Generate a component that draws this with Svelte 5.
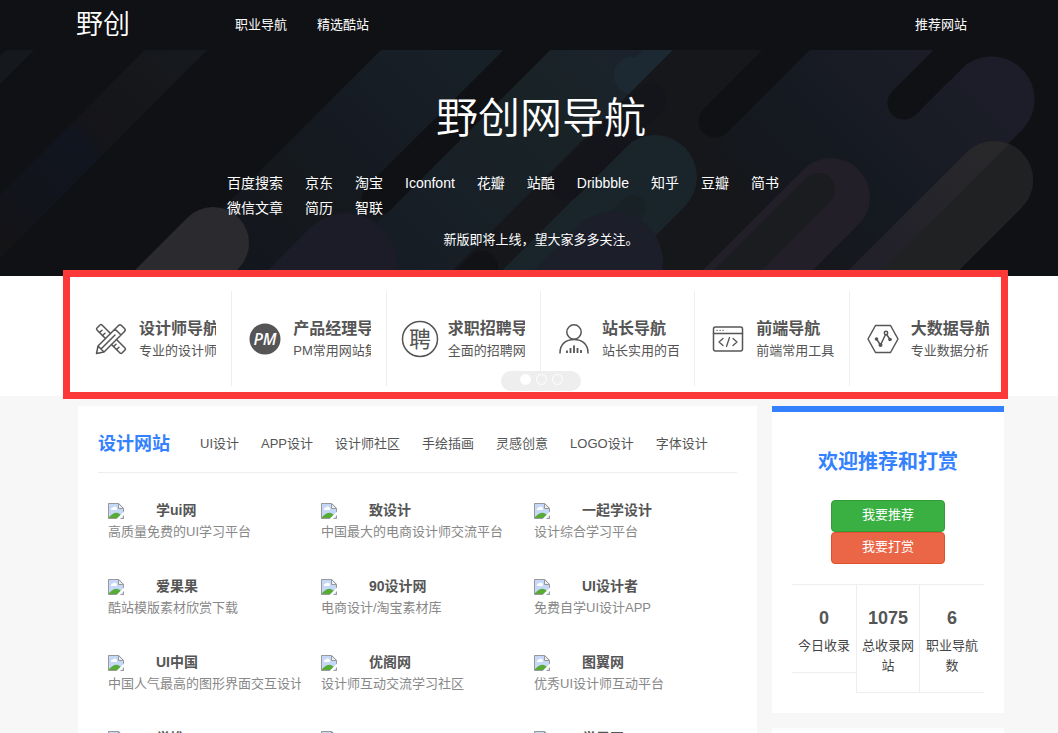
<script>
  const quickLinks = ['百度搜索', '京东', '淘宝', 'Iconfont', '花瓣', '站酷', 'Dribbble', '知乎', '豆瓣', '简书', '微信文章', '简历', '智联'];

  const features = [
    { icon: 'tools', title: '设计师导航', text: '专业的设计师网站导航' },
    { icon: 'pm', title: '产品经理导航', text: 'PM常用网站集合' },
    { icon: 'hire', title: '求职招聘导航', text: '全面的招聘网站导航' },
    { icon: 'user', title: '站长导航', text: '站长实用的百宝箱' },
    { icon: 'code', title: '前端导航', text: '前端常用工具' },
    { icon: 'data', title: '大数据导航', text: '专业数据分析' }
  ];

  const tabs = ['UI设计', 'APP设计', '设计师社区', '手绘插画', '灵感创意', 'LOGO设计', '字体设计'];

  const sites = [
    ['学ui网', '高质量免费的UI学习平台'],
    ['致设计', '中国最大的电商设计师交流平台'],
    ['一起学设计', '设计综合学习平台'],
    ['爱果果', '酷站模版素材欣赏下载'],
    ['90设计网', '电商设计/淘宝素材库'],
    ['UI设计者', '免费自学UI设计APP'],
    ['UI中国', '中国人气最高的图形界面交互设计'],
    ['优阁网', '设计师互动交流学习社区'],
    ['图翼网', '优秀UI设计师互动平台'],
    ['学堆', ''],
    ['', ''],
    ['学界网', '']
  ];

  const stats = [
    ['0', '今日收录'],
    ['1075', '总收录网站'],
    ['6', '职业导航数']
  ];
</script>

<header class="topbar">
  <a class="logo" href="#home">野创</a>
  <nav class="topnav">
    <a href="#jobs">职业导航</a>
    <a href="#picks">精选酷站</a>
    <a class="submit" href="#submit">推荐网站</a>
  </nav>
</header>

<section class="hero">
  <svg class="art" viewBox="0 50 1058 226" preserveAspectRatio="xMinYMin slice" aria-hidden="true">
    <defs>
      <linearGradient id="gb" gradientUnits="userSpaceOnUse" x1="180" y1="50" x2="0" y2="230">
        <stop offset="0" stop-color="#16191d" /><stop offset=".45" stop-color="#151519" />
        <stop offset=".55" stop-color="#11151f" /><stop offset=".85" stop-color="#12141b" /><stop offset="1" stop-color="#141417" />
      </linearGradient>
      <linearGradient id="gc" gradientUnits="userSpaceOnUse" x1="450" y1="50" x2="230" y2="270">
        <stop offset="0" stop-color="#182027" /><stop offset=".45" stop-color="#151a22" />
        <stop offset=".65" stop-color="#15191c" /><stop offset="1" stop-color="#13161e" />
      </linearGradient>
      <linearGradient id="gd" gradientUnits="userSpaceOnUse" x1="620" y1="50" x2="400" y2="270">
        <stop offset="0" stop-color="#1b222c" /><stop offset=".3" stop-color="#192326" />
        <stop offset=".7" stop-color="#182027" /><stop offset="1" stop-color="#161c24" />
      </linearGradient>
      <linearGradient id="gr" gradientUnits="userSpaceOnUse" x1="992" y1="80" x2="812" y2="260">
        <stop offset="0" stop-color="#1c1d28" /><stop offset=".35" stop-color="#191b25" />
        <stop offset=".6" stop-color="#151a22" /><stop offset="1" stop-color="#15171b" />
      </linearGradient>
      <linearGradient id="gf" gradientUnits="userSpaceOnUse" x1="994" y1="160" x2="894" y2="260">
        <stop offset="0" stop-color="#28282b" /><stop offset="1" stop-color="#22212a" />
      </linearGradient>
    </defs>
    <path fill="#15181c" d="M6 50H34L0 84V56Z" />
    <path fill="url(#gb)" d="M145 50H207L0 258V195Z" />
    <path fill="url(#gc)" d="M381 50H600V276H155Z" />
    <path fill="url(#gd)" d="M550 50H673L447 276H324Z" />
    <path fill="#1c2832" d="M643 50H673L629 94A16 16 0 0 1 636 57Z" />
    <path fill="#15171a" d="M673 50H810V276H447Z" />
    <path fill="url(#gr)" d="M810 50H932L950 81L961 69A43 43 0 0 1 1022 130L876 276H584Z" />
    <g fill="none" stroke-linecap="round">
      <path stroke="#101115" stroke-width="33" d="M547 30L378 199M806 30L715 121M977 30L904 103" />
      <path stroke="#1a242b" stroke-width="84" d="M655 177L535 297" />
      <path stroke="#172126" stroke-width="26" d="M633 208L563 278" />
      <path stroke="#14151b" stroke-width="33" d="M650 100L566 184" />
      <path stroke="#1c1e2a" stroke-width="100" d="M613 262L573 302" />
      <path stroke="#1b1c28" stroke-width="102" d="M346 264L306 304" />
      <path stroke="#2b2a2e" stroke-width="72" d="M213 243L153 303" />
      <path stroke="#101216" stroke-width="32" d="M482 267L452 297" />
      <path stroke="#221f28" stroke-width="78" d="M831 197L731 297" />
      <path stroke="#1b1c1f" stroke-width="34" d="M818 190L718 290" />
      <path stroke="url(#gf)" stroke-width="78" d="M994 180L874 300" />
    </g>
    <path fill="#202123" d="M1009 144A39 39 0 0 1 1022 207L953 276H877Z" />
  </svg>
  <h1>野创网导航</h1>
  <ul class="quick">
    {#each quickLinks as name}
      <li><a href="#go">{name}</a></li>
    {/each}
  </ul>
  <p class="notice">新版即将上线，望大家多多关注。</p>
</section>

<section class="features">
  <div class="track">
    {#each features as f}
      <a class="feature" href="#{f.icon}">
        <svg class="ficon" viewBox="0 0 40 40" aria-hidden="true" fill="none" stroke="#555" stroke-width="1.5" stroke-linejoin="round" stroke-linecap="round">
          {#if f.icon === 'tools'}
            <path d="M14.500 19.500L6 11Q5 10 6 9L9 6Q10 5 11 6L19.500 14.500M25.500 20.500L34 29Q35 30 34 31L31 34Q30 35 29 34L20.500 25.500" />
            <path d="M8.500 13.500L11 11.200M11.500 16.500L14 14.200M22.500 27.500L25 25.200M25.500 30.500L28 28.200" />
            <path d="M5.500 34.500L7 27L27.500 6.500Q29 5 30.500 6.500L33.500 9.500Q35 11 33.500 12.500L13 33ZM7 27L13 33M24 10L30 16M10 30L24 16" />
          {:else if f.icon === 'pm'}
            <circle cx="20" cy="20" r="15.500" fill="#555" stroke="none" />
            <text x="20" y="26" text-anchor="middle" class="pm">PM</text>
          {:else if f.icon === 'hire'}
            <circle cx="20" cy="20" r="17.500" />
            <text x="20" y="28" text-anchor="middle" class="pin">聘</text>
          {:else if f.icon === 'user'}
            <circle cx="20" cy="13" r="7.200" />
            <path d="M6 34C6 25 12 20.500 20 20.500S34 25 34 34" />
            <path stroke-linecap="butt" stroke-width="1.800" d="M13 34V31.500M16.500 34V29M20 34V26.500M23.500 34V29M27 34V31" />
          {:else if f.icon === 'code'}
            <rect x="5.500" y="8" width="29" height="24" rx="2" />
            <path d="M5.500 14.500H34.500" />
            <path stroke-width="1.300" d="M9 11.300H9.200M12 11.300H12.200M15 11.300H15.200M15 19.500L11 23L15 26.500M25 19.500L29 23L25 26.500M21.500 18.500L18.500 27.500" />
          {:else}
            <path d="M5 20L12.500 6.500H27.500L35 20L27.500 33.500H12.500Z" />
            <path d="M13.500 20L17.500 26L23 14.500L27 20.500" />
            <g fill="#555" stroke="none"><circle cx="13.500" cy="20" r="1.800" /><circle cx="17.500" cy="26" r="2" /><circle cx="27" cy="20.500" r="1.800" /></g>
            <circle cx="23" cy="14" r="1.700" fill="#fff" />
          {/if}
        </svg>
        <span class="ftext">
          <strong>{f.title}</strong>
          <span>{f.text}</span>
        </span>
      </a>
    {/each}
  </div>
  <div class="frame"></div>
  <div class="dots">
    <button class="on" aria-label="1"></button>
    <button aria-label="2"></button>
    <button aria-label="3"></button>
  </div>
</section>

<main class="content">
  <section class="card sites">
    <div class="cardhead">
      <h2>设计网站</h2>
      <nav>
        {#each tabs as t}<a href="#tab">{t}</a>{/each}
      </nav>
    </div>
    <ul class="grid">
      {#each sites as [name, text]}
        <li>
          <a href="#site">
            <span class="name">
              <svg class="missing" viewBox="0 0 16 16" aria-hidden="true">
                <path fill="#c5d8f7" d="M0 0H11L16 5V16H0Z" />
                <path fill="#fff" d="M3 7A2 2 0 0 1 5 4.500A2 2 0 0 1 8.500 7Z" />
                <path fill="#58ab38" d="M1 15V14Q7 8 11 10.500L13 12L10 15Z" />
                <path fill="none" stroke="#999" d="M10.500 .5H.5V15.500H15.500V5.500" />
                <path fill="#fff" d="M8.500 16L16 8.500V12L12 16Z" />
                <path fill="#eee" stroke="#999" d="M10.500 .5V5.500H15.500Z" />
              </svg>
              <strong>{name}</strong>
            </span>
            <span class="desc">{text}</span>
          </a>
        </li>
      {/each}
    </ul>
  </section>

  <aside>
    <section class="card welcome">
      <h2>欢迎推荐和打赏</h2>
      <div class="actions">
        <button class="green">我要推荐</button>
        <button class="orange">我要打赏</button>
      </div>
      <div class="stats">
        {#each stats as [n, label]}
          <div class="stat"><strong>{n}</strong><span>{label}</span></div>
        {/each}
      </div>
    </section>
    <section class="card next"></section>
  </aside>
</main>

<style>
  :global(body) {
    background: #f7f7f7;
    color: #555;
    font: 13px/20px "Liberation Sans", "Noto Sans CJK SC", sans-serif;
    overflow: hidden;
  }
  :global(#app) { height: 100vh; overflow: hidden; }
  a { color: inherit; text-decoration: none; }
  ul { list-style: none; margin: 0; padding: 0; }
  h1, h2, p { margin: 0; }

  .topbar {
    display: flex;
    align-items: center;
    height: 50px;
    padding: 0 91px 0 76px;
    background: #101115;
    color: #fff;
  }
  .logo { width: 159px; font-size: 27px; line-height: 52px; font-weight: 350; }
  .topnav { flex: 1; display: flex; gap: 30px; line-height: 50px; }
  .submit { margin-left: auto; }

  .hero {
    position: relative;
    height: 226px;
    box-sizing: border-box;
    padding: 38px 0 0 24px;
    overflow: hidden;
    background: #101115;
    color: #fff;
  }
  .art { position: absolute; inset: 0; width: 100%; height: 100%; }
  .hero h1 {
    position: relative;
    font-size: 42px;
    line-height: 62px;
    font-weight: 350;
    text-align: center;
  }
  .quick {
    position: relative;
    display: flex;
    flex-wrap: wrap;
    gap: 0 22px;
    max-width: 600px;
    margin: 21px 0 0 203px;
    font-size: 14px;
    line-height: 25px;
  }
  .notice { position: relative; margin-top: 9px; text-align: center; }

  .features {
    position: relative;
    padding: 15px 54px 10px 78px;
    background: #fff;
  }
  .track { display: grid; grid-template-columns: repeat(6, minmax(0, 1fr)); }
  .feature {
    display: flex;
    align-items: center;
    gap: 8px;
    height: 95px;
    padding: 0 15px 0 13px;
    border-right: 1px solid #eee;
  }
  .feature:last-child { border-right: 0; }
  .ficon { flex: none; width: 40px; height: 40px; }
  .pm { font: italic 600 16px "Open Sans", sans-serif; fill: #fff; stroke: none; }
  .pin { font: 22px "Noto Sans CJK SC", sans-serif; fill: #555; stroke: none; }
  .ftext { flex: 1; min-width: 0; padding-top: 3px; overflow: hidden; white-space: nowrap; }
  .ftext strong, .ftext span { display: block; line-height: 22px; }
  .ftext strong { font-size: 16px; font-weight: bold; }
  .frame {
    position: absolute;
    inset: -6px 50px -3px 63px;
    border: 7px solid #fd3838;
    pointer-events: none;
  }
  .dots {
    position: absolute;
    left: 501px;
    bottom: 5px;
    display: flex;
    justify-content: center;
    gap: 5px;
    width: 80px;
    height: 20px;
    padding-top: 3px;
    box-sizing: border-box;
    border-radius: 10px;
    background: #eee;
  }
  .dots button {
    width: 11px;
    height: 11px;
    padding: 0;
    border: 1px solid #fff;
    border-radius: 50%;
    background: none;
  }
  .dots .on { background: #fff; }

  .content {
    display: flex;
    align-items: flex-start;
    gap: 15px;
    padding: 10px 54px 0 78px;
  }
  .card { background: #fff; }
  .sites { flex: 1; min-width: 0; padding: 0 20px; }
  .cardhead {
    display: flex;
    align-items: center;
    gap: 30px;
    height: 56px;
    padding-top: 10px;
    border-bottom: 1px solid #eee;
    white-space: nowrap;
  }
  .cardhead h2 { font-size: 18px; line-height: 26px; color: #3481ff; }
  .cardhead nav { display: flex; gap: 22px; }
  .grid { display: grid; grid-template-columns: repeat(3, minmax(0, 1fr)); padding-top: 26px; }
  .grid li { height: 76px; padding: 0 10px; }
  .name { display: flex; align-items: center; gap: 32px; height: 22px; font-size: 14px; }
  .missing { width: 16px; height: 16px; margin-top: 2px; }
  .desc { display: block; line-height: 22px; color: #888; white-space: nowrap; overflow: hidden; }

  aside { width: 232px; }
  .welcome { border-top: 6px solid #3481ff; padding: 35px 20px 20px; }
  .welcome h2 { font-size: 20px; line-height: 30px; color: #3481ff; text-align: center; }
  .actions { display: flex; flex-direction: column; align-items: center; padding: 23px 0 20px; }
  .actions button {
    width: 114px;
    height: 32px;
    padding: 0 0 2px;
    border: 1px solid #339c39;
    border-radius: 4px;
    background: #39b041;
    color: #fff;
    font: inherit;
  }
  .actions .orange { border-color: #e2512f; background: #eb6547; }
  .stats { display: grid; grid-template-columns: repeat(3, 1fr); align-items: start; }
  .stat {
    padding: 20px 5px 16px;
    border: solid #eee;
    border-width: 1px 0;
    text-align: center;
    color: #444;
  }
  .stat:nth-child(2) { border-width: 1px; padding: 20px 4px 16px; }
  .stat strong { display: block; font-size: 18px; line-height: 26px; padding-bottom: 5px; color: #555; }
  .stat span { display: block; }
  .next { height: 120px; margin-top: 15px; }
</style>
